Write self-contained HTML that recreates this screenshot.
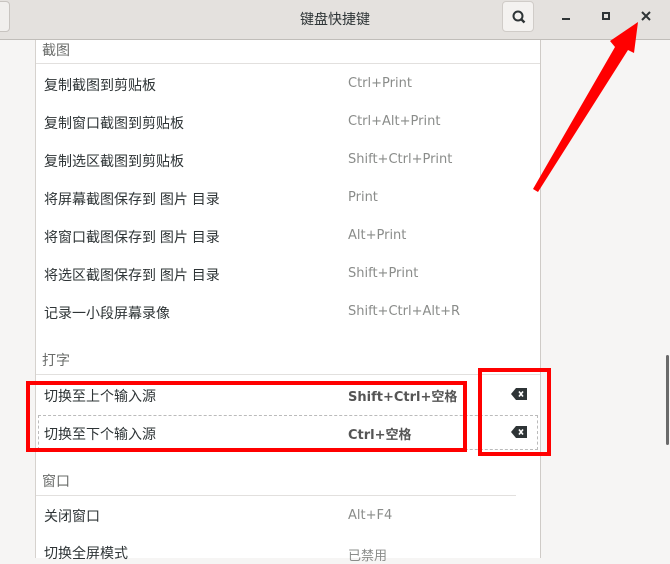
<!DOCTYPE html>
<html><head><meta charset="utf-8"><style>
*{margin:0;padding:0;box-sizing:border-box}
body{width:670px;height:558px;overflow:hidden;background:#f6f5f4;font-family:"Liberation Sans","Noto Sans CJK SC",sans-serif;position:relative}
.hdr{position:absolute;left:0;top:0;width:670px;height:40px;background:#e4e1de;border-bottom:1px solid #c0bdb9}
.title{position:absolute;left:0;width:670px;top:9px;text-align:center;font-size:14px;color:#2e3436}
.lb{position:absolute;left:-8px;top:1px;width:18px;height:31px;background:#f1efed;border:1px solid #c8c4c0;border-radius:4px}
.sb{position:absolute;left:502px;top:1px;width:32px;height:31px;background:#f4f2f0;border:1px solid #d0ccc8;border-radius:4px}
.panel{position:absolute;left:35px;top:40px;width:506px;height:518px;background:#fff;border-left:1px solid #d6d2ce;border-right:1px solid #cfcbc7}
.t{position:absolute;font-size:14px;color:#2e3436;white-space:nowrap}
.s{position:absolute;font-family:"DejaVu Sans","Noto Sans CJK SC",sans-serif;font-size:13px;color:#8a8c8a;white-space:nowrap;margin-top:3px}
.h{position:absolute;font-size:14px;color:#6a6c6a}
.ln{position:absolute;height:1px;background:#e2e0de}
.b{font-weight:bold;color:#555;margin-top:0}
.red{position:absolute;border:4px solid #f00}
</style></head><body>
<div class="hdr"><div class="lb"></div><div class="title">键盘快捷键</div>
<div class="sb"><svg width="32" height="31" viewBox="0 0 32 31"><circle cx="15" cy="14" r="4.5" fill="none" stroke="#2e3436" stroke-width="2"/><line x1="18.3" y1="17.3" x2="21.5" y2="20.5" stroke="#2e3436" stroke-width="2.4"/></svg></div>
<div style="position:absolute;left:562px;top:18px;width:8px;height:2px;background:#2e3436"></div>
<div style="position:absolute;left:602px;top:12px;width:8px;height:8px;border:2px solid #2e3436"></div>
<svg style="position:absolute;left:640px;top:10px" width="12" height="12"><path d="M2 2L10 10M10 2L2 10" stroke="#2e3436" stroke-width="2"/></svg>
</div>
<div class="panel"></div>
<div class="h" style="left:42px;top:40px">截图</div>
<div class="ln" style="left:36px;top:63px;width:504px"></div>
<div class="t" style="left:44px;top:75px">复制截图到剪贴板</div><div class="s" style="left:348px;top:73px">Ctrl+Print</div>
<div class="t" style="left:44px;top:113px">复制窗口截图到剪贴板</div><div class="s" style="left:348px;top:111px">Ctrl+Alt+Print</div>
<div class="t" style="left:44px;top:151px">复制选区截图到剪贴板</div><div class="s" style="left:348px;top:149px">Shift+Ctrl+Print</div>
<div class="t" style="left:44px;top:189px">将屏幕截图保存到 图片 目录</div><div class="s" style="left:348px;top:187px">Print</div>
<div class="t" style="left:44px;top:227px">将窗口截图保存到 图片 目录</div><div class="s" style="left:348px;top:225px">Alt+Print</div>
<div class="t" style="left:44px;top:265px">将选区截图保存到 图片 目录</div><div class="s" style="left:348px;top:263px">Shift+Print</div>
<div class="t" style="left:44px;top:303px">记录一小段屏幕录像</div><div class="s" style="left:348px;top:301px">Shift+Ctrl+Alt+R</div>
<div class="h" style="left:42px;top:350px">打字</div>
<div class="ln" style="left:36px;top:374px;width:504px"></div>
<div style="position:absolute;left:38px;top:415px;width:500px;height:35px;border:1px dashed #bbb"></div>
<div class="t" style="left:44px;top:386px">切换至上个输入源</div><div class="s b" style="left:348px;top:386px">Shift+Ctrl+空格</div>
<div class="t" style="left:44px;top:424px">切换至下个输入源</div><div class="s b" style="left:348px;top:424px">Ctrl+空格</div>
<svg style="position:absolute;left:511px;top:388px" width="16" height="12"><path d="M5 0H16V12H5L0 6Z" fill="#2e3436"/><path d="M8 3.5L12 8.5M12 3.5L8 8.5" stroke="#fff" stroke-width="1.6"/></svg>
<svg style="position:absolute;left:511px;top:426px" width="16" height="12"><path d="M5 0H16V12H5L0 6Z" fill="#2e3436"/><path d="M8 3.5L12 8.5M12 3.5L8 8.5" stroke="#fff" stroke-width="1.6"/></svg>
<div class="h" style="left:42px;top:471px">窗口</div>
<div class="ln" style="left:36px;top:495px;width:480px"></div>
<div class="t" style="left:44px;top:506px">关闭窗口</div><div class="s" style="left:348px;top:505px">Alt+F4</div>
<div class="t" style="left:44px;top:543px">切换全屏模式</div><div class="s" style="left:348px;top:542px">已禁用</div>
<div style="position:absolute;left:666px;top:355px;width:3px;height:90px;background:#6a6a6a;border-radius:2px"></div>
<div class="red" style="left:26px;top:381px;width:441px;height:71px"></div>
<div class="red" style="left:478px;top:368px;width:73px;height:88px"></div>
<svg style="position:absolute;left:0;top:0" width="670" height="558"><path d="M538 192L533 189L615 47L610 41L638 22L634 53L628 50Z" fill="#f00"/></svg>
</body></html>
